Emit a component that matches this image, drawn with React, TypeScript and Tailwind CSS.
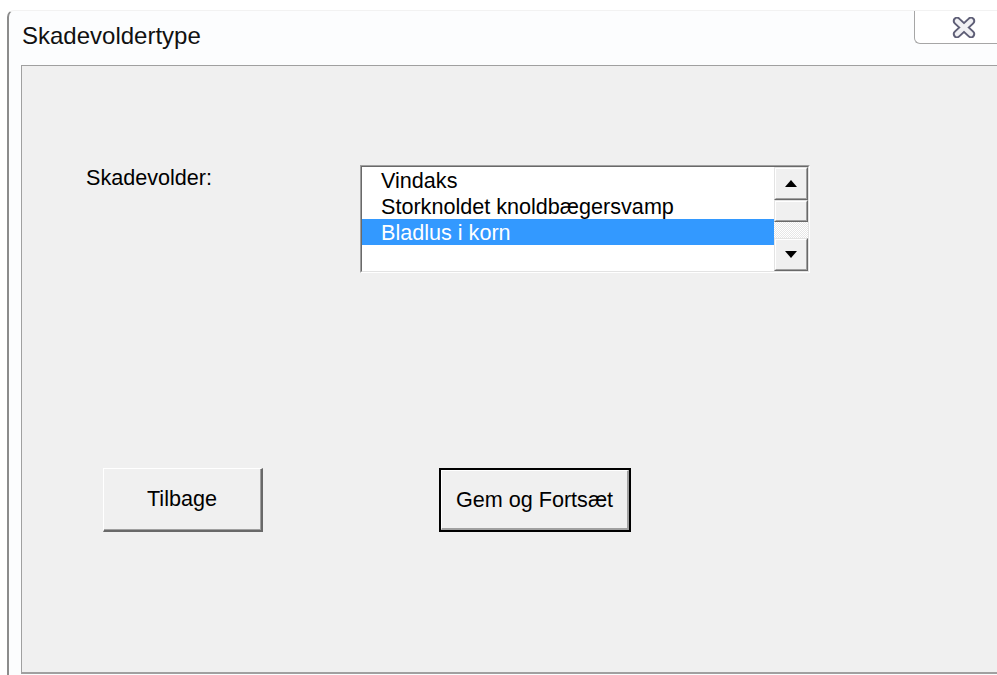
import React from "react";

const font = { fontFamily: '"Liberation Sans", Arial, sans-serif' };

function ArrowUp() {
  return (
    <svg width="12" height="7" viewBox="0 0 12 7">
      <polygon points="6,0 12,7 0,7" fill="#000" />
    </svg>
  );
}

function ArrowDown() {
  return (
    <svg width="12" height="7" viewBox="0 0 12 7">
      <polygon points="0,0 12,0 6,7" fill="#000" />
    </svg>
  );
}

function ScrollButton({ h, children }: { h: string; children?: React.ReactNode }) {
  return (
    <div className={`${h} border-t border-l border-b border-r border-t-[#e3e3e3] border-l-[#e3e3e3] border-b-[#696969] border-r-[#696969]`}>
      <div className="h-full w-full border-t border-l border-b border-r border-t-white border-l-white border-b-[#a0a0a0] border-r-[#a0a0a0] bg-[#f0f0f0] flex items-center justify-center">
        {children}
      </div>
    </div>
  );
}

function CloseGlyph() {
  return (
    <svg width="24" height="21" viewBox="0 0 24 21">
      <path d="M5 4 L19 17 M19 4 L5 17" stroke="#5e5e76" strokeWidth="8.5" strokeLinecap="round" />
      <path d="M5 4 L19 17 M19 4 L5 17" stroke="#f0f0f3" strokeWidth="4.5" strokeLinecap="round" />
    </svg>
  );
}

const items = ["Vindaks", "Storknoldet knoldbægersvamp", "Bladlus i korn", ""];

export default function App() {
  return (
    <div className="h-[675px] w-[997px] overflow-hidden bg-white pt-[10px] pl-[7px] text-black" style={font}>
      <div className="h-[665px] flex flex-col border-l-2 border-t border-l-[#8c8c8c] border-t-[#f2f2f2] rounded-tl-[7px] bg-[#fcfdfe]">
        {/* caption bar */}
        <div className="h-[54px] flex justify-between items-start">
          <div className="pl-[13px] pt-[11px] text-[24px] leading-[28px] text-[#111]">Skadevoldertype</div>
          <div className="w-[83px] h-[33px] border-l border-b border-[#a6a6a6] rounded-bl-[6px] bg-white flex items-center pl-[37px]">
            <CloseGlyph />
          </div>
        </div>

        {/* client area */}
        <div className="flex-1 mb-[1px] ml-[12px] border-t border-l border-b-2 border-[#a0a0a0] bg-[#f0f0f0] text-[21.6px]">
          <div className="pt-[99px] pl-[64px] flex items-start">
            <div className="w-[274px] mt-[1px] leading-[24px]">Skadevolder:</div>
            <div className="w-[450px] h-[108px] border border-t-[#a0a0a0] border-l-[#a0a0a0] border-b-white border-r-white">
              <div className="h-full w-full border border-t-[#696969] border-l-[#696969] border-b-[#e3e3e3] border-r-[#e3e3e3] bg-white flex">
                <div className="w-[412px] flex flex-col">
                  {items.map((t, i) => (
                    <div
                      key={i}
                      className={`h-[26px] pl-[19px] pt-[2px] leading-[24px] whitespace-nowrap ${i === 2 ? "bg-[#3399ff] text-white" : ""}`}
                    >
                      {t}
                    </div>
                  ))}
                </div>
                <div className="w-[34px] flex flex-col">
                  <ScrollButton h="h-[33px]">
                    <ArrowUp />
                  </ScrollButton>
                  <ScrollButton h="h-[22px]" />
                  <div className="h-[16px] bg-[repeating-conic-gradient(#e6e6e6_0_25%,#ffffff_0_50%)] bg-[length:2px_2px]" />
                  <ScrollButton h="h-[33px]">
                    <ArrowDown />
                  </ScrollButton>
                </div>
              </div>
            </div>
          </div>

          <div className="mt-[195px] pl-[81px] flex gap-[176px]">
            <div className="w-[160px] h-[64px] border-t border-l border-b-2 border-r-2 border-t-white border-l-white border-b-[#696969] border-r-[#696969]">
              <div className="h-full w-full border-b border-r border-b-[#a0a0a0] border-r-[#a0a0a0] bg-[#f0f0f0] flex items-center justify-center leading-[24px]">
                Tilbage
              </div>
            </div>
            <div className="w-[192px] h-[64px] border-2 border-black">
              <div className="h-full w-full border-t border-l border-b-2 border-r-2 border-t-white border-l-white border-b-[#a0a0a0] border-r-[#a0a0a0] bg-[#f0f0f0] flex items-center justify-center leading-[24px]">
                Gem og Fortsæt
              </div>
            </div>
          </div>
        </div>
      </div>
    </div>
  );
}
